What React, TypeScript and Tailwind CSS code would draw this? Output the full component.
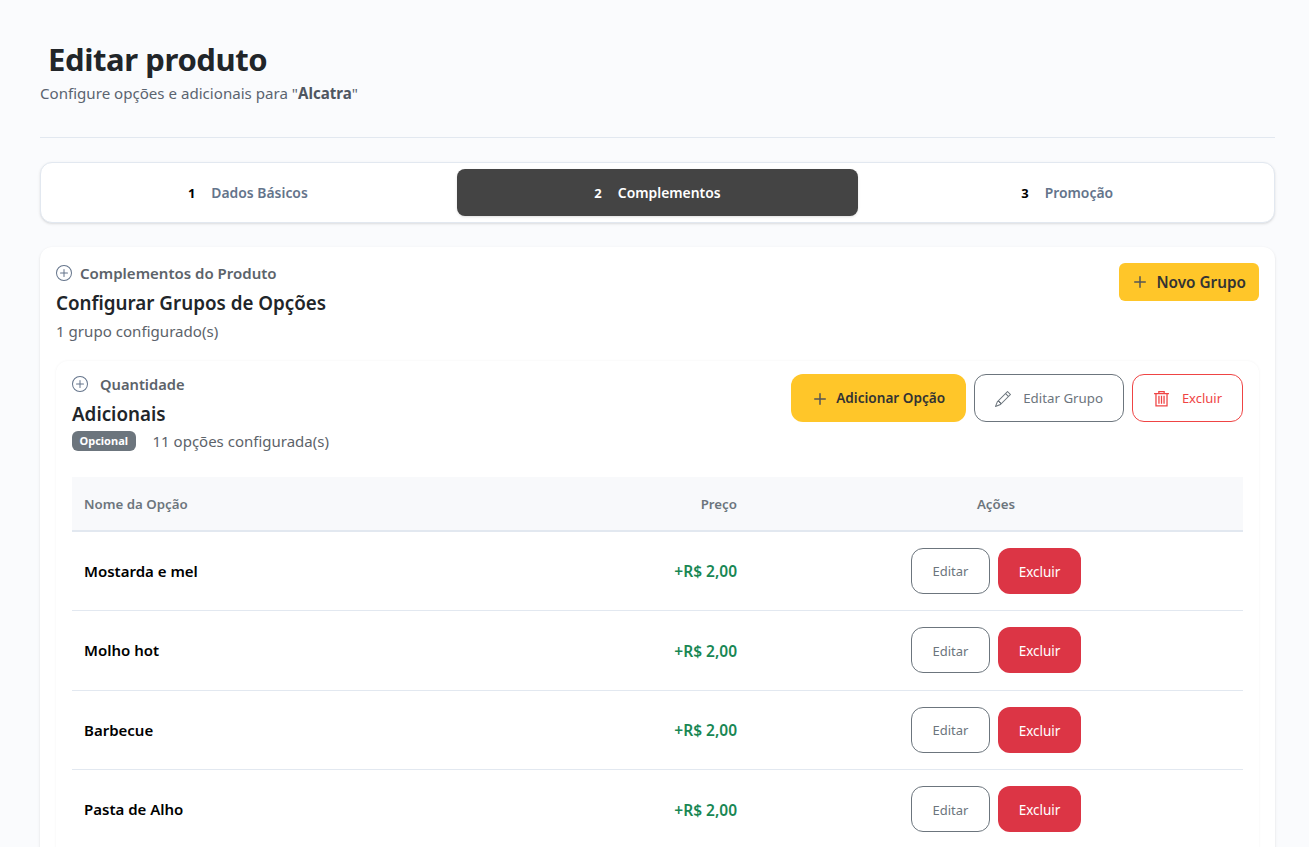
import { BsPlusCircle, BsPlus, BsPencil } from "react-icons/bs";

const rows = ["Mostarda e mel", "Molho hot", "Barbecue", "Pasta de Alho"];

const steps = [
  { n: 1, label: "Dados Básicos" },
  { n: 2, label: "Complementos", active: true },
  { n: 3, label: "Promoção" },
];

function TrashIcon() {
  return (
    <svg viewBox="0 0 16 16" className="h-[17px] w-[17px]" fill="none" stroke="currentColor" strokeWidth="1.2">
      <path d="M1 3.5h14M5.5 3.5v-2h5v2M2.8 3.5v11.5h10.4v-11.5M5.6 5.5v7.5M8 5.5v7.5M10.4 5.5v7.5" />
    </svg>
  );
}

export default function App() {
  return (
    <div className="h-screen overflow-hidden bg-[#fafbfd] pl-10 pr-[34px] pt-[37px] font-['Noto_Sans',sans-serif] text-[#212529]">
      <h1 className="pl-2 text-[31px] font-bold leading-[44px] tracking-[-0.4px]">Editar produto</h1>
      <p className="mt-[2px] text-[15.1px] leading-5 text-[#5b6470]">
        Configure opções e adicionais para "<b className="font-bold text-[#4f5660]">Alcatra</b>"
      </p>
      <hr className="mt-[34px] border-[#e2e8f0]" />

      <div className="mt-6 flex h-[61px] gap-2 rounded-xl border border-[#e2e8f0] bg-white p-[6px] shadow-sm">
        {steps.map((s) => (
          <div
            key={s.n}
            className={`flex flex-1 items-center justify-center gap-4 rounded-lg pt-[2px] text-[13.9px] font-semibold ${
              s.active ? "bg-[#444444] text-white shadow" : "text-[#64748b]"
            }`}
          >
            <span className={`text-[13px] font-bold ${s.active ? "text-white" : "text-black"}`}>{s.n}</span>
            <span>{s.label}</span>
          </div>
        ))}
      </div>

      <div className="mt-6 rounded-xl bg-white p-4 shadow-sm">
        <div className="flex items-start justify-between">
          <div>
            <div className="flex items-center gap-2 text-[15px] font-semibold leading-5 text-[#5c636a]">
              <BsPlusCircle className="h-4 w-4 text-[#64748b]" />
              Complementos do Produto
            </div>
            <h2 className="mt-[7px] text-[18.8px] font-semibold leading-[26px]">Configurar Grupos de Opções</h2>
            <p className="mt-[5px] text-[15.1px] leading-5 text-[#5c636a]">1 grupo configurado(s)</p>
          </div>
          <button className="flex h-[38px] items-center gap-1 rounded-md bg-[#ffc629] pl-[9px] pr-[13px] text-[15.3px] font-semibold text-[#333]">
            <BsPlus className="h-6 w-6 text-[#555]" />
            Novo Grupo
          </button>
        </div>

        <div className="mt-[20px] rounded-xl bg-white px-4 pb-4 pt-[13px] shadow-[0_0_3px_rgba(15,23,42,0.05)]">
          <div className="flex items-start justify-between">
            <div>
              <div className="flex items-center gap-3 text-[14.7px] font-semibold leading-5 text-[#5c636a]">
                <BsPlusCircle className="h-4 w-4 text-[#64748b]" />
                Quantidade
              </div>
              <h3 className="mt-[7px] text-[18.8px] font-semibold leading-[26px]">Adicionais</h3>
              <div className="mt-[4px] flex items-center gap-[17px]">
                <span className="rounded-md bg-[#6c757d] px-[7.5px] py-[3px] text-[11px] font-bold leading-[14px] text-white">Opcional</span>
                <span className="text-[15px] leading-5 text-[#5c636a]">11 opções configurada(s)</span>
              </div>
            </div>
            <div className="flex gap-2">
              <button className="flex h-12 items-center gap-1 rounded-xl bg-[#ffc629] pl-[17px] pr-[21px] pt-px text-[13.6px] font-semibold text-[#333]">
                <BsPlus className="h-6 w-6 text-[#555]" />
                Adicionar Opção
              </button>
              <button className="flex h-12 items-center gap-3 rounded-xl border border-[#6c757d] bg-white px-5 pt-px text-[13.3px] text-[#6c757d]">
                <BsPencil className="h-4 w-4" />
                Editar Grupo
              </button>
              <button className="flex h-12 w-[111px] items-center justify-center gap-3 rounded-xl border border-[#ef4444] bg-white pt-px text-[13px] text-[#ef4444]">
                <TrashIcon />
                Excluir
              </button>
            </div>
          </div>

          <table className="mt-[26px] w-full table-fixed border-collapse">
            <thead>
              <tr className="h-[54px] border-b-2 border-[#e2e8f0] bg-[#f8f9fb] text-[13.3px] text-[#6c757d]">
                <th className="px-3 pt-[2px] text-left font-semibold">Nome da Opção</th>
                <th className="w-[200px] px-3 pt-[2px] text-right font-semibold">Preço</th>
                <th className="w-[494px] px-3 pt-[2px] text-center font-semibold">Ações</th>
              </tr>
            </thead>
            <tbody>
              {rows.map((name) => (
                <tr key={name} className="h-[79.5px] border-b border-[#e2e8f0]">
                  <td className="px-3 text-[15px] font-semibold text-black">{name}</td>
                  <td className="px-3 pt-[2px] text-right text-[15.5px] font-semibold text-[#198754]">+R$ 2,00</td>
                  <td className="px-3">
                    <div className="flex justify-center gap-2">
                      <button className="h-[46px] w-[79px] rounded-xl border border-[#6c757d] bg-white pt-[2px] text-[13px] text-[#6c757d]">Editar</button>
                      <button className="h-[46px] w-[83px] rounded-xl bg-[#dc3545] pt-[2px] text-[13.5px] text-white">Excluir</button>
                    </div>
                  </td>
                </tr>
              ))}
            </tbody>
          </table>
        </div>
      </div>
    </div>
  );
}
